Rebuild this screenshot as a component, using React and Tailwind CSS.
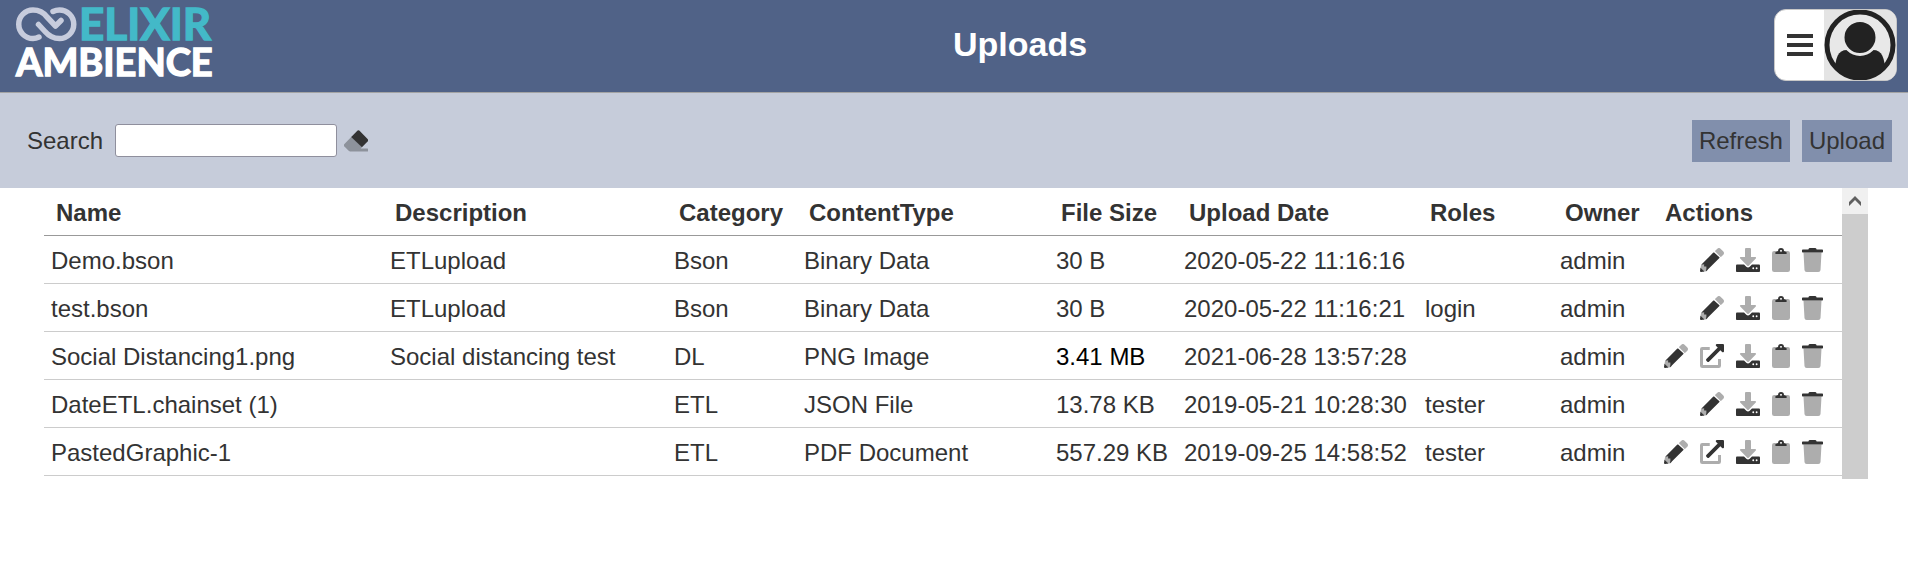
const FILES = [
  { name: 'Demo.bson', description: 'ETLupload', category: 'Bson', type: 'Binary Data', size: '30 B', date: '2020-05-22 11:16:16', roles: '', owner: 'admin' },
  { name: 'test.bson', description: 'ETLupload', category: 'Bson', type: 'Binary Data', size: '30 B', date: '2020-05-22 11:16:21', roles: 'login', owner: 'admin' },
  { name: 'Social Distancing1.png', description: 'Social distancing test', category: 'DL', type: 'PNG Image', size: '3.41 MB', date: '2021-06-28 13:57:28', roles: '', owner: 'admin', canOpen: true, highlightSize: true },
  { name: 'DateETL.chainset (1)', description: '', category: 'ETL', type: 'JSON File', size: '13.78 KB', date: '2019-05-21 10:28:30', roles: 'tester', owner: 'admin' },
  { name: 'PastedGraphic-1', description: '', category: 'ETL', type: 'PDF Document', size: '557.29 KB', date: '2019-09-25 14:58:52', roles: 'tester', owner: 'admin', canOpen: true },
];

const COLUMNS = [
  { label: 'Name', width: 'w-[339px]' },
  { label: 'Description', width: 'w-[284px]' },
  { label: 'Category', width: 'w-[130px]' },
  { label: 'ContentType', width: 'w-[252px]' },
  { label: 'File Size', width: 'w-[128px]' },
  { label: 'Upload Date', width: 'w-[241px]' },
  { label: 'Roles', width: 'w-[135px]' },
  { label: 'Owner', width: 'w-[100px]' },
  { label: 'Actions', width: 'w-[189px]' },
];

const DARK = '#333333';
const LIGHT = '#adadad';

function PencilIcon() {
  return (
    <svg viewBox="0 0 512 512" className="h-6 w-6" aria-hidden="true">
      <path fill={LIGHT} d="M498 142l-46 46c-5 5-13 5-17 0L324 77c-5-5-5-12 0-17l46-46c19-19 49-19 68 0l60 60c19 19 19 49 0 68z" />
      <path fill={LIGHT} d="M22 362L8 440l64 64 78-14 26-58-24-60-52-4-16-50z" />
      <path fill={DARK} d="M12 420L0 485c-2 16 11 29 27 27l66-12z" />
      <path fill={DARK} d="M302 98c-5-5-12-5-17 0L26 358l62-14v48h48v48l-12 62 290-290c5-5 5-12 0-17z" />
    </svg>
  );
}

function OpenIcon() {
  return (
    <svg viewBox="0 0 512 512" className="h-6 w-6" aria-hidden="true">
      <path fill={LIGHT} d="M448 320v144a48 48 0 0 1-48 48H48a48 48 0 0 1-48-48V112a48 48 0 0 1 48-48h160v64H64v320h320V320z" />
      <path fill={DARK} d="M512 24v128c0 21-26 32-41 17l-36-36-244 244c-9 9-24 9-34 0l-22-22c-9-10-9-25 0-34L379 77l-36-36c-15-15-4-41 17-41h128c13 0 24 11 24 24z" />
    </svg>
  );
}

function DownloadIcon() {
  return (
    <svg viewBox="0 0 512 512" className="h-6 w-6" aria-hidden="true">
      <path fill={LIGHT} d="M320 24v168h88c18 0 27 21 14 34L271 378c-8 8-22 8-30 0L90 226c-13-13-4-34 14-34h88V24c0-13 11-24 24-24h80c13 0 24 11 24 24z" />
      <path fill={DARK} fillRule="evenodd" d="M488 352H341l-49 49c-20 20-52 20-72 0l-49-49H24c-13 0-24 11-24 24v112c0 13 11 24 24 24h464c13 0 24-11 24-24V376c0-13-11-24-24-24zM368 412a20 20 0 1 1 0 40 20 20 0 1 1 0-40zm72 0a20 20 0 1 1 0 40 20 20 0 1 1 0-40z" />
    </svg>
  );
}

function ClipboardIcon() {
  return (
    <svg viewBox="0 0 384 512" className="h-6 w-[18px]" aria-hidden="true">
      <rect fill={LIGHT} y="64" width="384" height="448" rx="48" />
      <path fill={DARK} fillRule="evenodd" d="M256 64a64 64 0 1 0-128 0L72 88v28a12 12 0 0 0 12 12h216a12 12 0 0 0 12-12V88zm-64-24a24 24 0 1 1 0 48 24 24 0 1 1 0-48z" />
    </svg>
  );
}

function TrashIcon() {
  return (
    <svg viewBox="0 0 448 512" className="h-6 w-[21px]" aria-hidden="true">
      <path fill={LIGHT} d="M32 96h384l-21 371a48 48 0 0 1-48 45H101a48 48 0 0 1-48-45z" />
      <path fill={DARK} d="M432 32H312l-9-19A24 24 0 0 0 281 0H167a24 24 0 0 0-22 13l-9 19H16A16 16 0 0 0 0 48v32a16 16 0 0 0 16 16h416a16 16 0 0 0 16-16V48a16 16 0 0 0-16-16z" />
    </svg>
  );
}

function EraserIcon() {
  return (
    <svg viewBox="0 0 512 512" className="h-6 w-6" aria-hidden="true">
      <path fill="#8d929b" d="M164 162L14 312a48 48 0 0 0 0 68l86 86a48 48 0 0 0 34 14h366a12 12 0 0 0 12-12v-40a12 12 0 0 0-12-12H356l26-26z" />
      <path fill={DARK} d="M498 274L382 390 154 172 274 46a48 48 0 0 1 68 0l156 160a48 48 0 0 1 0 68z" />
    </svg>
  );
}

function Logo() {
  return (
    <a href="#home" aria-label="Elixir Ambience" className="block w-[250px]">
      <svg viewBox="0 0 250 92" className="h-[92px] w-[250px] overflow-visible" aria-hidden="true">
        <g fill="none" stroke="#c7ccdd" strokeWidth="5.5" strokeLinecap="round" strokeLinejoin="round">
          <path d="M23 37C21 38 19 38.500 17 38.500A14.250 14.250 0 0 1 17 10C24 10 28 13 31 17L39.500 26L45 20.500" />
          <path d="M37 11.500C39 10.500 41 10 43.500 10A14.250 14.250 0 0 1 43.500 38.500C36 38.500 32 35 29 31.500L22.500 24.500" />
        </g>
        <g fontFamily="Lato, sans-serif" fontWeight="700" strokeWidth="1.4">
          <text x="63" y="40" fill="#43b9c8" stroke="#43b9c8" fontSize="44">ELIXIR</text>
          <text x="0" y="76" fill="#ffffff" stroke="#ffffff" fontSize="38">AMBIENCE</text>
        </g>
      </svg>
    </a>
  );
}

function Avatar() {
  return (
    <svg viewBox="0 0 72 70" className="h-[70px] w-[72px] bg-[#e4e4e4]" aria-hidden="true">
      <clipPath id="avatar-ring"><circle cx="36" cy="35" r="34" /></clipPath>
      <circle cx="36" cy="35" r="33" fill="#e8e8e8" stroke="#222222" strokeWidth="5" />
      <path clipPath="url(#avatar-ring)" fill="#222222" d="M11 62C11 48 14 40 23 40H49C58 40 61 48 61 62L50 70H22z" />
      <circle cx="36" cy="27.500" r="17" fill="#222222" stroke="#e8e8e8" strokeWidth="3" />
    </svg>
  );
}

function IconButton({ label, children }) {
  return (
    <button type="button" aria-label={label} title={label} className="block cursor-pointer">
      {children}
    </button>
  );
}

function Header() {
  return (
    <header className="flex h-[93px] items-center border-b border-[#a3a3a3] bg-[#506287] pr-[11px] pl-4">
      <Logo />
      <h1 className="flex-1 pb-1 text-center text-[34px] leading-10 font-bold text-white">Uploads</h1>
      <button type="button" aria-label="Account menu" className="mb-[2px] flex h-[72px] items-center overflow-hidden rounded-xl border border-[#c8c8c8] bg-white">
        <span className="flex w-[49px] justify-center">
          <svg viewBox="0 0 26 22" className="h-[22px] w-[26px]" aria-hidden="true">
            <path fill={DARK} d="M0 0h26v4H0zM0 9h26v4H0zM0 18h26v4H0z" />
          </svg>
        </span>
        <Avatar />
      </button>
    </header>
  );
}

function Toolbar() {
  return (
    <div className="flex h-[95px] items-center bg-[#c6ccda] pr-4 pl-[27px]">
      <label htmlFor="search" className="mr-3">Search</label>
      <input id="search" type="text" className="mr-[7px] h-[33px] w-[222px] rounded-[3px] border border-[#8f8f9d] bg-white px-1 outline-none" />
      <IconButton label="Clear search"><EraserIcon /></IconButton>
      <div className="ml-auto flex gap-3">
        <button type="button" className="h-[42px] bg-[#818fac] px-[7px]">Refresh</button>
        <button type="button" className="h-[42px] bg-[#818fac] px-[7px]">Upload</button>
      </div>
    </div>
  );
}

function Cell({ children, highlight }) {
  return (
    <td className={highlight ? 'border-b border-[#cccccc] px-[7px] pt-0.5 text-black' : 'border-b border-[#cccccc] px-[7px] pt-0.5'}>
      {children}
    </td>
  );
}

function FileRow({ file }) {
  return (
    <tr className="h-12">
      <Cell>{file.name}</Cell>
      <Cell>{file.description}</Cell>
      <Cell>{file.category}</Cell>
      <Cell>{file.type}</Cell>
      <Cell highlight={file.highlightSize}>{file.size}</Cell>
      <Cell>{file.date}</Cell>
      <Cell>{file.roles}</Cell>
      <Cell>{file.owner}</Cell>
      <td className="border-b border-[#cccccc] pr-[19px]">
        <div className="flex justify-end gap-3">
          <IconButton label="Edit"><PencilIcon /></IconButton>
          {file.canOpen && <IconButton label="Open"><OpenIcon /></IconButton>}
          <IconButton label="Download"><DownloadIcon /></IconButton>
          <IconButton label="Copy"><ClipboardIcon /></IconButton>
          <IconButton label="Delete"><TrashIcon /></IconButton>
        </div>
      </td>
    </tr>
  );
}

function FileTable() {
  return (
    <main className="mr-10 ml-11 flex">
      <div className="min-w-0 flex-1 pb-[3px]">
        <table className="w-full table-fixed border-separate border-spacing-0 whitespace-nowrap">
          <thead>
            <tr className="h-12">
              {COLUMNS.map((column) => (
                <th key={column.label} scope="col" className={`${column.width} border-b border-[#999999] px-3 pt-0.5 text-left font-bold`}>{column.label}</th>
              ))}
            </tr>
          </thead>
          <tbody>
            {FILES.map((file) => <FileRow key={file.name} file={file} />)}
          </tbody>
        </table>
      </div>
      <div className="w-[26px] bg-[#cdcdcd]">
        <button type="button" aria-label="Scroll up" className="flex h-[26px] w-full items-center justify-center bg-[#f0f0f0]">
          <svg viewBox="0 0 12 10" className="h-[10px] w-3" aria-hidden="true">
            <path fill="#606060" d="M0 6L6 0l6 6v4L6 4 0 10z" />
          </svg>
        </button>
      </div>
    </main>
  );
}

export default function App() {
  return (
    <div className="min-h-screen bg-white font-['Liberation_Sans',Arial,sans-serif] text-2xl leading-7 text-[#333333]">
      <Header />
      <Toolbar />
      <FileTable />
    </div>
  );
}
